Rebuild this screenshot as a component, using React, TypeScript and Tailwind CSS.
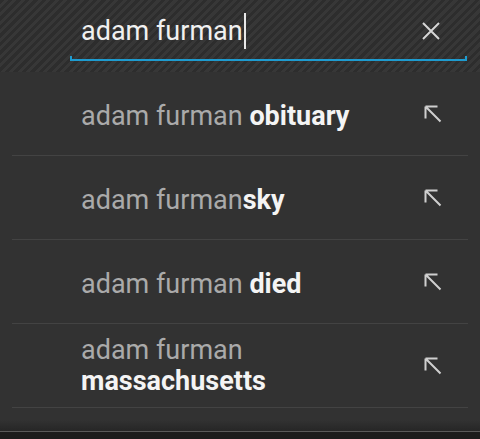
import React from "react";

const suggestions = [
  { rest: " obituary" },
  { rest: "sky" },
  { rest: " died" },
  { rest: "massachusetts", wrap: true },
];

function ArrowUpLeft() {
  return (
    <svg width="18" height="18" viewBox="0 0 18 18" fill="none" stroke="#cfcfcf" strokeWidth="2">
      <path d="M1.5 1.5H13.5M1.5 1.5V13.5M1.5 1.5L16.5 16.5" />
    </svg>
  );
}

function ClearIcon() {
  return (
    <svg width="20" height="20" viewBox="0 0 20 20" fill="none" stroke="#d6d6d6" strokeWidth="2">
      <path d="M2 2L18 18M18 2L2 18" />
    </svg>
  );
}

export default function App() {
  return (
    <div className="flex h-[439px] w-[480px] flex-col overflow-hidden bg-[#323232] font-['Roboto',sans-serif]">
      <header className="h-[72px] shrink-0 bg-[repeating-linear-gradient(135deg,#2d2d2d_0px,#2d2d2d_3px,#373737_3px,#373737_6px)] pt-[13px]">
        <div className="relative ml-[70px] w-[397px]">
          <div className="flex h-[36px] items-center pl-[11px] pr-[26px]">
            <span className="text-[27px] leading-none text-[#f0f0f0]">adam furman</span>
            <span className="ml-px h-[36px] w-[2px] bg-[#e8e8e8]" />
            <span className="ml-auto flex">
              <ClearIcon />
            </span>
          </div>
          <div className="mt-[7px] h-[5px] border-x-2 border-b-2 border-[#1e9bcf]" />
        </div>
      </header>

      <ul className="shrink-0">
        {suggestions.map((s, i) => (
          <li key={i} className="mx-[12px] flex h-[84px] items-center border-b border-[#434343] pl-[69px] pr-[26px]">
            <span
              className={`text-[27px] leading-[31px] text-[#aaaaaa] ${s.wrap ? "w-[190px]" : "pt-[5px]"}`}
            >
              adam furman
              {s.wrap ? " " : ""}
              <span className="font-bold text-[#f4f4f4]">{s.rest}</span>
            </span>
            <span className="ml-auto flex">
              <ArrowUpLeft />
            </span>
          </li>
        ))}
      </ul>

      <div className="mt-auto h-[11px] bg-gradient-to-b from-[#323232] to-[#262626]" />
      <div className="h-[1px] bg-[#5a5a5a]" />
      <div className="h-[7px] bg-[#1c1c1c]" />
    </div>
  );
}
